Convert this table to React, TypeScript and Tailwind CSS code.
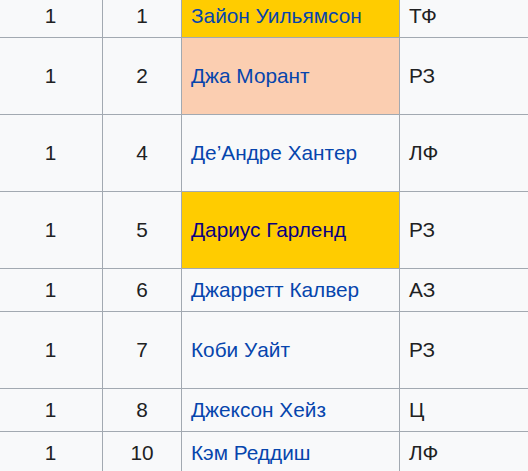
import React from "react";

interface PickType {
  round: number;
  pick: number;
  name: string;
  pos: string;
  tall: boolean;
  bg?: "gold" | "peach";
  visited?: boolean;
}

const picks: PickType[] = [
  { round: 1, pick: 1, name: "Зайон Уильямсон", pos: "ТФ", tall: false, bg: "gold" },
  { round: 1, pick: 2, name: "Джа Морант", pos: "РЗ", tall: true, bg: "peach" },
  { round: 1, pick: 4, name: "Де’Андре Хантер", pos: "ЛФ", tall: true },
  { round: 1, pick: 5, name: "Дариус Гарленд", pos: "РЗ", tall: true, bg: "gold", visited: true },
  { round: 1, pick: 6, name: "Джарретт Калвер", pos: "АЗ", tall: false },
  { round: 1, pick: 7, name: "Коби Уайт", pos: "РЗ", tall: true },
  { round: 1, pick: 8, name: "Джексон Хейз", pos: "Ц", tall: false },
  { round: 1, pick: 10, name: "Кэм Реддиш", pos: "ЛФ", tall: false },
];

const App = () => {
  return (
    <div
      className="w-[528px] h-[471px] overflow-hidden bg-[#f8f9fa]"
      style={{ fontFamily: '"Liberation Sans", Arial, sans-serif' }}
    >
      <table className="table-fixed border-collapse -mt-[6px] -ml-[2px] w-[660px] text-[20.8px] leading-[1.2] text-[#202122] bg-[#f8f9fa]">
        <colgroup>
          <col className="w-[104px]" />
          <col className="w-[79px]" />
          <col className="w-[218px]" />
          <col className="w-[259px]" />
        </colgroup>
        <tbody>
          {picks.map((p) => (
            <tr key={p.pick} className={p.tall ? "h-[77px]" : "h-[43px]"}>
              {/* Round */}
              <td className="border border-[#a2a9b1] text-center align-middle p-0">
                {p.round}
              </td>

              {/* Pick */}
              <td className="border border-[#a2a9b1] text-center align-middle p-0">
                {p.pick}
              </td>

              {/* Player */}
              <td
                className={`border border-[#a2a9b1] align-middle px-[9px] py-0 ${
                  p.bg === "gold"
                    ? "bg-[#ffcc00]"
                    : p.bg === "peach"
                      ? "bg-[#fbceb1]"
                      : ""
                }`}
              >
                <span className={p.visited ? "text-[#0b0080]" : "text-[#0645ad]"}>
                  {p.name}
                </span>
              </td>

              {/* Position */}
              <td className="border border-[#a2a9b1] align-middle px-[9px] py-0">
                {p.pos}
              </td>
            </tr>
          ))}
        </tbody>
      </table>
    </div>
  );
};

export default App;
